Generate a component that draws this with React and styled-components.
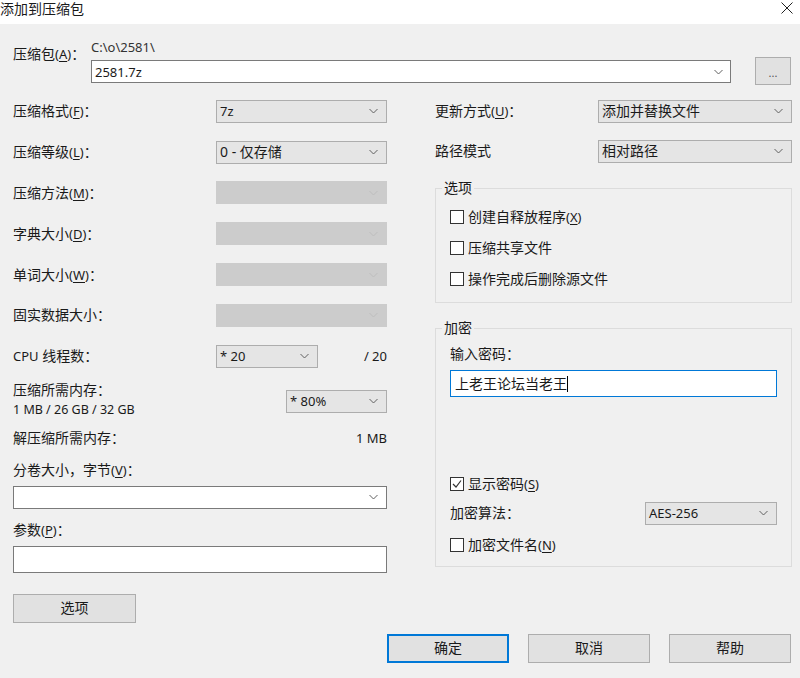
import React from "react";
import styled, { createGlobalStyle } from "styled-components";

const GlobalStyle = createGlobalStyle`
  html, body {
    margin: 0;
    padding: 0;
    background: #f0f0f0;
  }
  body {
    font-family: "Noto Sans", "Noto Sans CJK SC", sans-serif;
    font-size: 14px;
    color: #1a1a1a;
  }
`;

const Window = styled.div`
  width: 800px;
  height: 678px;
  background: #f0f0f0;
  overflow: hidden;
`;

const TitleBar = styled.div`
  height: 23px;
  background: #fff;
  display: flex;
  align-items: flex-start;
  justify-content: space-between;
  padding: 1px 7px 0 0;
  line-height: 16px;
  font-size: 14px;
`;

const CloseX = styled.svg`
  margin-top: 1px;
`;

const Body = styled.div`
  padding: 0 8px 0 13px;
`;

const ArchiveRow = styled.div`
  display: flex;
  align-items: flex-start;
  height: 47px;
  margin-top: 15px;
  padding-right: 1px;
`;

const ArchiveLabel = styled.div`
  width: 78px;
  flex: none;
  padding-top: 6px;
  line-height: 18px;
`;

const ArchiveFields = styled.div`
  flex: 1;
  display: flex;
  flex-direction: column;
`;

const PathText = styled.div`
  font-size: 13px;
  line-height: 16px;
  color: #333;
`;

const ArchivePick = styled.div`
  display: flex;
  align-items: flex-start;
  gap: 24px;
  margin-top: 5px;
`;

const BrowseButton = styled.div`
  box-sizing: border-box;
  width: 36px;
  height: 28px;
  margin-top: -3px;
  display: flex;
  align-items: center;
  justify-content: center;
  background: #e1e1e1;
  border: 1px solid #adadad;
  font-size: 11px;
  color: #555;
  padding-top: 3px;
`;

const Columns = styled.div`
  display: flex;
  align-items: flex-start;
  gap: 48px;
  margin-top: 5px;
`;

const LeftCol = styled.div`
  width: 374px;
  flex: none;
  display: flex;
  flex-direction: column;
`;

const RightCol = styled.div`
  width: 357px;
  flex: none;
  display: flex;
  flex-direction: column;
`;

const FieldRow = styled.div`
  display: flex;
  align-items: center;
  justify-content: space-between;
  height: ${(p) => p.$h || 40.8}px;
`;

const Label = styled.div`
  line-height: 18px;
  white-space: nowrap;
`;

const Mn = styled.span`
  font-size: 13px;
  u {
    text-underline-offset: 2px;
  }
`;

const ComboBox = styled.div`
  box-sizing: border-box;
  width: ${(p) => (p.$width ? `${p.$width}px` : "auto")};
  flex: ${(p) => (p.$grow ? 1 : "none")};
  height: ${(p) => p.$height || 23}px;
  margin-top: ${(p) => p.$mt || 0}px;
  display: flex;
  align-items: center;
  justify-content: space-between;
  padding: 0 ${(p) => p.$pr || 8}px 0 3px;
  background: ${(p) => (p.$disabled ? "#cccccc" : p.$white ? "#ffffff" : "#e5e5e5")};
  border: 1px solid ${(p) => (p.$disabled ? "#cccccc" : p.$white ? "#7a7a7a" : "#adadad")};
  font-size: ${(p) => (p.$latin ? 13 : 14)}px;
  line-height: 18px;
  white-space: nowrap;
`;

const Chevron = ({ color }) => (
  <svg width="9" height="6" viewBox="0 0 9 6">
    <path d="M0.5 1 L4.5 5 L8.5 1" fill="none" stroke={color} strokeWidth="1" />
  </svg>
);

const Combo = ({ value, width, grow, latin, white, disabled, height, mt, pr }) => (
  <ComboBox
    $width={width}
    $grow={grow}
    $latin={latin}
    $white={white}
    $disabled={disabled}
    $height={height}
    $mt={mt}
    $pr={pr}
  >
    <span>{value}</span>
    <Chevron color={disabled ? "#bdbdbd" : "#606060"} />
  </ComboBox>
);

const SideGroup = styled.div`
  width: 171px;
  display: flex;
  align-items: center;
  justify-content: space-between;
`;

const NumText = styled.div`
  font-size: 13px;
  line-height: 18px;
`;

const MemRow = styled.div`
  display: flex;
  align-items: flex-start;
  justify-content: space-between;
  margin-top: 4px;
  height: 38px;
`;

const SmallText = styled.div`
  font-size: 12.5px;
  line-height: 20px;
  margin-top: 1px;
`;

const Spaced = styled.div`
  margin-top: ${(p) => p.$mt}px;
`;

const TextInput = styled.div`
  box-sizing: border-box;
  height: 27px;
  margin-top: ${(p) => p.$mt || 0}px;
  background: #fff;
  border: 1px solid ${(p) => (p.$focus ? "#0078d7" : "#7a7a7a")};
  padding: 0 4px;
  display: flex;
  align-items: center;
  font-size: 14px;
  line-height: 18px;
`;

const Caret = styled.span`
  display: inline-block;
  width: 1px;
  height: 16px;
  background: #000;
  vertical-align: middle;
`;

const Button = styled.div`
  box-sizing: border-box;
  width: ${(p) => p.$width || 122}px;
  height: 29px;
  display: flex;
  align-items: center;
  justify-content: center;
  background: #e1e1e1;
  border: ${(p) => (p.$default ? "2px solid #0078d7" : "1px solid #adadad")};
  font-size: 14px;
  line-height: 18px;
`;

const Group = styled.fieldset`
  margin: ${(p) => p.$mt}px 0 0 0;
  padding: ${(p) => p.$pt}px 14px ${(p) => p.$pb}px 14px;
  border: 1px solid #dcdcdc;
  min-width: 0;
`;

const Legend = styled.legend`
  padding: 0 2px;
  margin-left: -8px;
  line-height: 18px;
`;

const CheckRow = styled.div`
  display: flex;
  align-items: center;
  gap: 4px;
  height: ${(p) => p.$h || 31}px;
`;

const Box = styled.div`
  box-sizing: border-box;
  width: 14px;
  height: 14px;
  border: 1px solid #333;
  background: #fff;
  display: flex;
  align-items: center;
  justify-content: center;
`;

const Check = ({ checked, h, children }) => (
  <CheckRow $h={h}>
    <Box>
      {checked && (
        <svg width="10" height="10" viewBox="0 0 10 10">
          <path d="M1 5 L4 8 L9 1.5" fill="none" stroke="#333" strokeWidth="1.2" />
        </svg>
      )}
    </Box>
    <Label>{children}</Label>
  </CheckRow>
);

const Footer = styled.div`
  display: flex;
  justify-content: flex-end;
  gap: 19px;
  margin-top: 11px;
  padding-right: 1px;
`;

const leftRows = [
  { label: "压缩格式", key: "F", value: "7z", latin: true },
  { label: "压缩等级", key: "L", value: "0 - 仅存储" },
  { label: "压缩方法", key: "M", disabled: true },
  { label: "字典大小", key: "D", disabled: true },
  { label: "单词大小", key: "W", disabled: true },
  { label: "固实数据大小", disabled: true },
];

const App = () => {
  return (
    <Window>
      <GlobalStyle />
      <TitleBar>
        <span>添加到压缩包</span>
        <CloseX width="12" height="12" viewBox="0 0 12 12">
          <path d="M0.5 0.5 L11.5 11.5 M11.5 0.5 L0.5 11.5" stroke="#222" strokeWidth="1" />
        </CloseX>
      </TitleBar>
      <Body>
        <ArchiveRow>
          <ArchiveLabel>
            压缩包<Mn>(<u>A</u>)</Mn>：
          </ArchiveLabel>
          <ArchiveFields>
            <PathText>C:\o\2581\</PathText>
            <ArchivePick>
              <Combo value="2581.7z" latin white grow pr={7} />
              <BrowseButton>...</BrowseButton>
            </ArchivePick>
          </ArchiveFields>
        </ArchiveRow>

        <Columns>
          <LeftCol>
            {leftRows.map((r) => (
              <FieldRow key={r.label}>
                <Label>
                  {r.label}
                  {r.key && (
                    <Mn>
                      (<u>{r.key}</u>)
                    </Mn>
                  )}
                  ：
                </Label>
                <Combo value={r.value} width={171} latin={r.latin} disabled={r.disabled} />
              </FieldRow>
            ))}
            <FieldRow>
              <Label>
                <Mn>CPU</Mn> 线程数：
              </Label>
              <SideGroup>
                <Combo value="* 20" width={102} latin />
                <NumText>/ 20</NumText>
              </SideGroup>
            </FieldRow>
            <MemRow>
              <div>
                <Label>压缩所需内存：</Label>
                <SmallText>1 MB / 26 GB / 32 GB</SmallText>
              </div>
              <Combo value="* 80%" width={101} latin mt={9} />
            </MemRow>
            <FieldRow $h={18} style={{ marginTop: 10 }}>
              <Label>解压缩所需内存：</Label>
              <NumText>1 MB</NumText>
            </FieldRow>
            <Spaced $mt={14}>
              <Label>
                分卷大小，字节<Mn>(<u>V</u>)</Mn>：
              </Label>
            </Spaced>
            <Combo white mt={7} />
            <Spaced $mt={12}>
              <Label>
                参数<Mn>(<u>P</u>)</Mn>：
              </Label>
            </Spaced>
            <TextInput $mt={7} />
            <Spaced $mt={21}>
              <Button $width={123}>选项</Button>
            </Spaced>
          </LeftCol>

          <RightCol>
            <FieldRow $h={40}>
              <Label>
                更新方式<Mn>(<u>U</u>)</Mn>：
              </Label>
              <Combo value="添加并替换文件" width={194} />
            </FieldRow>
            <FieldRow $h={40}>
              <Label>路径模式</Label>
              <Combo value="相对路径" width={194} />
            </FieldRow>

            <Group $mt={8} $pt={4} $pb={8}>
              <Legend>选项</Legend>
              <Check>
                创建自释放程序<Mn>(<u>X</u>)</Mn>
              </Check>
              <Check>压缩共享文件</Check>
              <Check>操作完成后删除源文件</Check>
            </Group>

            <Group $mt={16} $pt={8} $pb={4}>
              <Legend>加密</Legend>
              <Label>输入密码：</Label>
              <TextInput $mt={7} $focus>
                上老王论坛当老王
                <Caret />
              </TextInput>
              <Spaced $mt={71} />
              <Check checked>
                显示密码<Mn>(<u>S</u>)</Mn>
              </Check>
              <FieldRow $h={28}>
                <Label>加密算法：</Label>
                <Combo value="AES-256" width={132} latin />
              </FieldRow>
              <Check h={35}>
                加密文件名<Mn>(<u>N</u>)</Mn>
              </Check>
            </Group>
          </RightCol>
        </Columns>

        <Footer>
          <Button $default>确定</Button>
          <Button>取消</Button>
          <Button>帮助</Button>
        </Footer>
      </Body>
    </Window>
  );
};

export default App;
